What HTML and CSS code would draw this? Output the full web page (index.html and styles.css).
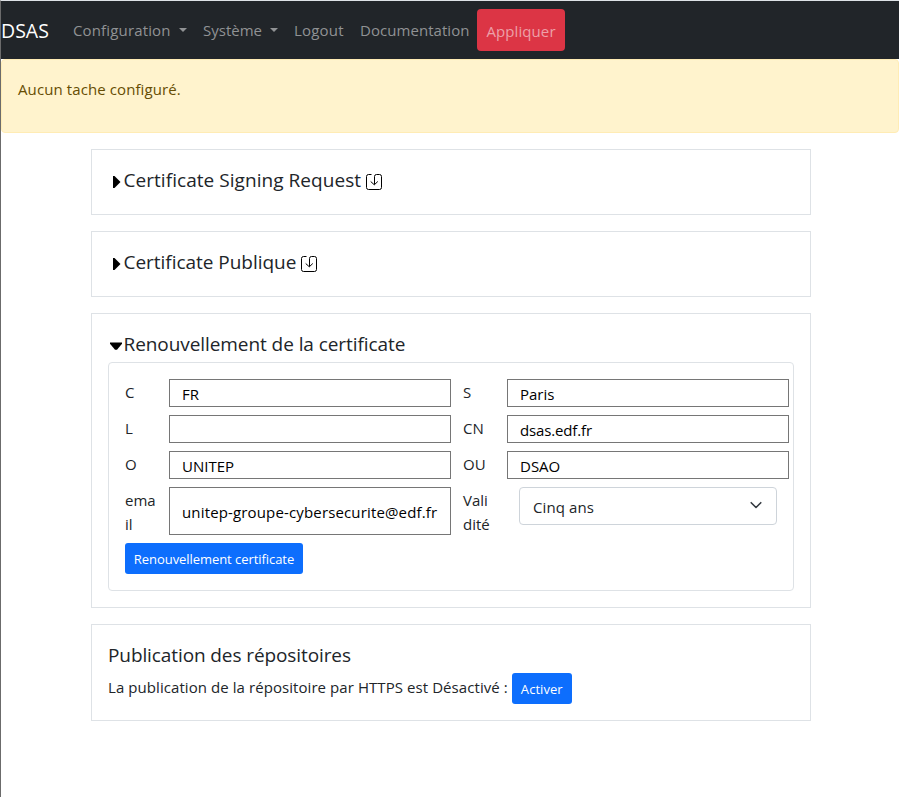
FILE: index.html
```html
<!DOCTYPE html>
<html lang="fr">
<head>
<meta charset="utf-8">
<title>DSAS</title>
<link rel="stylesheet" href="styles.css">
</head>
<body>
<nav class="navbar">
  <a class="brand"><span>DSAS</span></a>
  <a class="nav-link nav-config"><span>Configuration</span><i class="caret"></i></a>
  <a class="nav-link nav-system"><span>Système</span><i class="caret"></i></a>
  <a class="nav-link nav-logout"><span>Logout</span></a>
  <a class="nav-link nav-doc"><span>Documentation</span></a>
  <a class="apply"><span>Appliquer</span></a>
</nav>
<div class="alert"><span>Aucun tache configuré.</span></div>
<main class="container">
  <section class="card closed">
    <h5><svg class="tri" viewBox="0 0 16 16"><path d="M5 2h1.5l6 6-6 6H5z"/></svg><span class="t-csr">Certificate Signing Request</span><svg class="dl" viewBox="0 0 16 16"><path d="M5.5.5h-3a2 2 0 0 0-2 2v11a2 2 0 0 0 2 2h11a2 2 0 0 0 2-2v-11a2 2 0 0 0-2-2h-3a2 2 0 0 0-2 2v8M4.7 7.5l3.6 3.3 3.5-3.3"/></svg></h5>
  </section>
  <section class="card closed">
    <h5><svg class="tri" viewBox="0 0 16 16"><path d="M5 2h1.5l6 6-6 6H5z"/></svg><span class="t-pub">Certificate Publique</span><svg class="dl" viewBox="0 0 16 16"><path d="M5.5.5h-3a2 2 0 0 0-2 2v11a2 2 0 0 0 2 2h11a2 2 0 0 0 2-2v-11a2 2 0 0 0-2-2h-3a2 2 0 0 0-2 2v8M4.7 7.5l3.6 3.3 3.5-3.3"/></svg></h5>
  </section>
  <section class="card renew">
    <h5><svg class="tri" viewBox="0 0 16 16"><path d="M2 4.5h12v1.3L9 11.7H7L2 5.8z"/></svg><span class="t-renew">Renouvellement de la certificate</span></h5>
    <div class="panel">
      <div class="grid">
        <label>C</label><div class="field">FR</div><label>S</label><div class="field">Paris</div>
        <label>L</label><div class="field"></div><label>CN</label><div class="field"><span class="t-dsas">dsas.edf.fr</span></div>
        <label>O</label><div class="field">UNITEP</div><label>OU</label><div class="field">DSAO</div>
        <label>ema<br>il</label><div class="field"><span class="t-mail">unitep-groupe-cybersecurite@edf.fr</span></div><label>Vali<br>dité</label><div class="select"><span>Cinq ans</span><svg viewBox="0 0 16 16"><path d="m3.2 5.7 4.8 4.8 4.8-4.8"/></svg></div>
      </div>
      <button class="btn btn-renew"><span>Renouvellement certificate</span></button>
    </div>
  </section>
  <section class="card publish">
    <h5><span class="t-repo">Publication des répositoires</span></h5>
    <div class="row"><span class="t-state">La publication de la répositoire par HTTPS est Désactivé :</span><button class="btn btn-on"><span>Activer</span></button></div>
  </section>
</main>
</body>
</html>
```
FILE: styles.css
```css
* { box-sizing: border-box; }
body {
  margin: 0;
  min-height: 797px;
  background: #fff;
  border-top: 1px solid #dee2e6;
  border-left: 1px solid #6b6b6b;
  font: 15px/24px "Open Sans", "Noto Sans", sans-serif;
  color: #212529;
  white-space: nowrap;
}
.navbar { display: flex; align-items: center; height: 58px; background: #212529; color: #909294; }
.brand { width: 72px; font-size: 19.5px; color: #fff; padding-top: 2px; }
.nav-link { display: flex; }
.nav-config { width: 130px; letter-spacing: .15px; }
.nav-system { width: 91px; }
.nav-logout { width: 66px; letter-spacing: .2px; }
.nav-doc { width: 117px; letter-spacing: .05px; }
.caret { margin: 10px 0 0 8px; border: 4.5px solid transparent; border-top-color: currentColor; border-bottom: 0; height: 0; }
.apply { width: 88px; height: 42px; padding-top: 10px; text-align: center; border-radius: 4px; background: #dc3545; color: #eda0a8; letter-spacing: .1px; }
.alert { height: 74px; padding: 17px 16px; background: #fff3cd; border: 1px solid #ffecb5; border-radius: 4px; color: #664d03; letter-spacing: .1px; }
.container { width: 720px; margin: 16px 0 0 90px; display: grid; grid-template-columns: 720px; gap: 16px; }
.card { border: 1px solid #dee2e6; padding: 16px; }
.closed { height: 66px; }
.renew { height: 295px; }
.publish { height: 97px; }
h5 { display: flex; align-items: center; height: 29px; margin: 0; font-size: 19px; line-height: 29px; font-weight: 400; }
.tri { width: 16px; height: 16px; margin: 2px 0 0; fill: #000; }
.tri + span { margin-left: -.5px; }
.t-csr { letter-spacing: .05px; }
.t-pub { letter-spacing: -.03px; }
.t-renew { letter-spacing: -.07px; }
.t-repo { letter-spacing: -.1px; }
.dl { width: 16px; height: 16px; margin: 3px 0 0 5px; fill: none; stroke: #000; }
.panel { height: 229px; margin-top: 3px; padding: 16px; border: 1px solid #dee2e6; border-radius: 4px; }
.grid { display: grid; grid-template-columns: 44px 282px 56px 282px; grid-template-rows: 28px 28px 28px 48px; row-gap: 8px; }
label { padding-top: 1px; }
label:nth-child(4n+3) { padding-left: 12px; }
.field { display: flex; align-items: center; padding: 2px 12px 0; border: 1px solid #767676; color: #000; }
.t-dsas { letter-spacing: -.15px; }
.t-mail { letter-spacing: .15px; }
.select { display: flex; justify-content: space-between; align-items: center; width: 258px; height: 38px; margin-left: 12px; padding: 2px 12px 0 13px; border: 1px solid #ced4da; border-radius: 4px; letter-spacing: .1px; }
.select svg { width: 16px; height: 16px; margin-top: -4px; fill: none; stroke: #343a40; stroke-width: 1.6; stroke-linecap: round; stroke-linejoin: round; }
.btn { height: 31px; padding: 1px 0 0; border: 0; border-radius: 3px; background: #0d6efd; color: #fff; font: 13px/24px "Open Sans", "Noto Sans", sans-serif; text-align: center; }
.btn-renew { display: block; width: 178px; margin-top: 8px; letter-spacing: -.06px; }
.row { display: flex; align-items: center; margin-top: 3px; }
.t-state { letter-spacing: .07px; margin-top: -3px; }
.btn-on { width: 60px; margin-left: 4px; letter-spacing: .05px; }
```
